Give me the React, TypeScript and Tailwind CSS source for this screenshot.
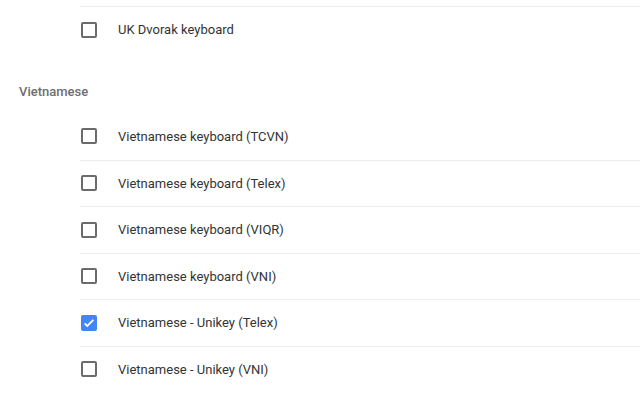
const rows = [
  { label: "Vietnamese keyboard (TCVN)", checked: false },
  { label: "Vietnamese keyboard (Telex)", checked: false },
  { label: "Vietnamese keyboard (VIQR)", checked: false },
  { label: "Vietnamese keyboard (VNI)", checked: false },
  { label: "Vietnamese - Unikey (Telex)", checked: true },
  { label: "Vietnamese - Unikey (VNI)", checked: false },
];

function Checkbox({ checked }: { checked: boolean }) {
  if (checked) {
    return (
      <div className="w-4 h-4 rounded-[2px] bg-[#4285f4] flex items-center justify-center shrink-0">
        <svg width="14" height="14" viewBox="0 0 24 24" fill="none">
          <path d="M4.5 12.5l4.5 4.5L19.5 6.5" stroke="white" strokeWidth="3" />
        </svg>
      </div>
    );
  }
  return <div className="w-4 h-4 rounded-[2px] border-2 border-[#6b6b6b] shrink-0" />;
}

function Row({ label, checked, divider }: { label: string; checked: boolean; divider: boolean }) {
  return (
    <div
      className={
        "h-[46.5px] flex items-center pl-[1px] " +
        (divider ? "border-t border-[rgba(0,0,0,0.07)]" : "")
      }
    >
      <Checkbox checked={checked} />
      <span className="ml-[21px] text-[13px] text-[#333333]">{label}</span>
    </div>
  );
}

export default function App() {
  return (
    <div className="w-[640px] h-[400px] bg-white overflow-hidden font-['Roboto',sans-serif]">
      <div className="pt-[6px] pl-[80px]">
        <Row label="UK Dvorak keyboard" checked={false} divider />
      </div>
      <div className="pl-[19px] pt-[29px] pb-[11px] h-[60.5px]">
        <div className="text-[13px] leading-5 font-medium text-[#6e6e6e]">Vietnamese</div>
      </div>
      <div className="pl-[80px]">
        {rows.map((r, i) => (
          <Row key={r.label} label={r.label} checked={r.checked} divider={i > 0} />
        ))}
      </div>
    </div>
  );
}
